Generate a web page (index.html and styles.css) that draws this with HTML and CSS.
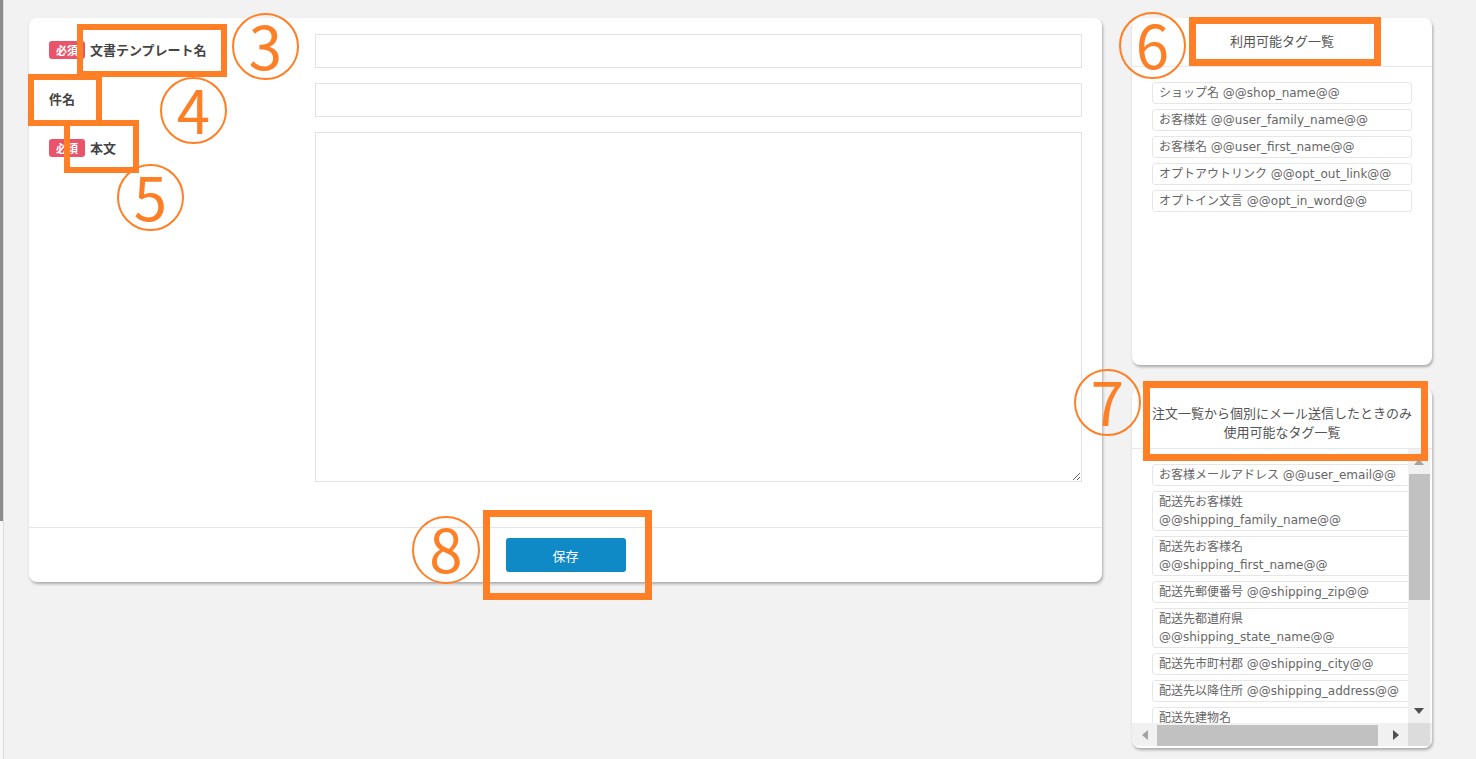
FILE: index.html
```html
<!DOCTYPE html>
<html lang="ja">
<head>
  <meta charset="UTF-8">
  <meta name="viewport" content="width=device-width, initial-scale=1.0">
  <title>メールテンプレート編集</title>
  <link rel="stylesheet" href="styles.css">
</head>
<body>
  <div class="page">
    <div class="edge"></div>

    <div class="layout">
      <form class="card main-card">
        <div class="form-grid">
          <label class="field-label"><span class="badge">必須</span>文書テンプレート名</label>
          <input type="text" class="text-input">

          <label class="field-label">件名</label>
          <input type="text" class="text-input">

          <label class="field-label"><span class="badge">必須</span>本文</label>
          <textarea class="text-area"></textarea>
        </div>
        <div class="card-footer">
          <button type="button" class="btn-primary">保存</button>
        </div>
      </form>

      <aside class="side">
        <div class="panel tags-panel">
          <div class="panel-head">利用可能タグ一覧</div>
          <ul class="tag-list">
            <li class="tag">ショップ名 @@shop_name@@</li>
            <li class="tag">お客様姓 @@user_family_name@@</li>
            <li class="tag">お客様名 @@user_first_name@@</li>
            <li class="tag">オプトアウトリンク @@opt_out_link@@</li>
            <li class="tag">オプトイン文言 @@opt_in_word@@</li>
          </ul>
        </div>

        <div class="panel order-panel">
          <div class="panel-head">注文一覧から個別にメール送信したときのみ<br>使用可能なタグ一覧</div>
          <div class="scroll-view">
            <div class="scroll-body">
              <ul class="tag-list">
                <li class="tag">お客様メールアドレス @@user_email@@</li>
                <li class="tag">配送先お客様姓 @@shipping_family_name@@</li>
                <li class="tag">配送先お客様名 @@shipping_first_name@@</li>
                <li class="tag">配送先郵便番号 @@shipping_zip@@</li>
                <li class="tag">配送先都道府県 @@shipping_state_name@@</li>
                <li class="tag">配送先市町村郡 @@shipping_city@@</li>
                <li class="tag">配送先以降住所 @@shipping_address@@</li>
                <li class="tag">配送先建物名 @@shipping_building_name@@</li>
              </ul>
            </div>
            <div class="vbar">
              <div class="sb-btn"><span class="arrow arrow-up"></span></div>
              <div class="vbar-thumb"></div>
              <div class="sb-fill"></div>
              <div class="sb-btn"><span class="arrow arrow-down"></span></div>
            </div>
          </div>
          <div class="hbar">
            <div class="sb-btn-h"><span class="arrow arrow-left"></span></div>
            <div class="hbar-thumb"></div>
            <div class="sb-fill"></div>
            <div class="sb-btn-h"><span class="arrow arrow-right"></span></div>
            <div class="sb-corner"></div>
          </div>
        </div>
      </aside>
    </div>

    <!-- annotation marks drawn over the screenshot -->
    <div class="annotations">
      <div class="mark-box box-3"></div>
      <div class="mark-box box-4"></div>
      <div class="mark-box box-5"></div>
      <div class="mark-box box-6"></div>
      <div class="mark-box box-7"></div>
      <div class="mark-box box-8"></div>
      <div class="mark-num num-3">3</div>
      <div class="mark-num num-4">4</div>
      <div class="mark-num num-5">5</div>
      <div class="mark-num num-6">6</div>
      <div class="mark-num num-7">7</div>
      <div class="mark-num num-8">8</div>
    </div>
  </div>
</body>
</html>
```

FILE: styles.css
```css
* {
  box-sizing: border-box;
}

body {
  margin: 0;
  background-color: #f2f2f2;
  font-family: "DejaVu Sans", "Noto Sans CJK JP", sans-serif;
  font-size: 13px;
  color: #444;
}

.page {
  position: relative;
  display: flex;
  min-height: 759px;
}

.edge {
  width: 4px;
  flex: none;
  background: linear-gradient(#8c8c8c 0 521px, #f7f7f7 521px);
  border-right: 1px solid #dcdcdc;
}

.layout {
  display: flex;
  align-items: flex-start;
  gap: 30px;
  padding: 18px 0 0 25px;
}

/* main form card */
.card {
  background-color: #fff;
  border-radius: 8px;
  box-shadow: 1px 2px 3px rgba(0, 0, 0, 0.3);
}

.main-card {
  width: 1073px;
  margin: 0;
}

.form-grid {
  display: grid;
  grid-template-columns: 266px 767px;
  row-gap: 15px;
  padding: 16px 20px 45px;
}

.field-label {
  display: flex;
  align-items: center;
  gap: 5px;
  align-self: start;
  padding-top: 6px;
  line-height: 20px;
  font-family: "Noto Sans CJK JP", sans-serif;
  font-weight: bold;
  color: #444;
}

.badge {
  display: inline-block;
  width: 36px;
  height: 18px;
  border-radius: 3px;
  background-color: #e9546b;
  color: #fff;
  font-size: 11px;
  line-height: 18px;
  text-align: center;
}

.text-input,
.text-area {
  display: block;
  width: 100%;
  border: 1px solid #e2e2e2;
  border-radius: 0;
  font-family: inherit;
  font-size: 13px;
}

.text-input {
  height: 34px;
}

.text-area {
  height: 350px;
  resize: both;
}

.card-footer {
  display: flex;
  justify-content: center;
  padding: 10px;
  border-top: 1px solid #e6e6e6;
}

.btn-primary {
  width: 120px;
  height: 34px;
  border: none;
  border-radius: 3px;
  background-color: #108ac6;
  color: #fff;
  font-family: "Noto Sans CJK JP", sans-serif;
  font-size: 13px;
  cursor: pointer;
}

/* tag panels */
.side {
  width: 300px;
  display: flex;
  flex-direction: column;
  gap: 23px;
}

.panel {
  background-color: #fff;
  border-radius: 8px;
  box-shadow: 1px 2px 3px rgba(0, 0, 0, 0.3);
  overflow: hidden;
}

.panel-head {
  text-align: center;
  color: #555;
  font-family: "Noto Sans CJK JP", sans-serif;
  border-bottom: 1px solid #e8e8e8;
}

.tags-panel {
  height: 347px;
}

.tags-panel .panel-head {
  height: 49px;
  line-height: 46px;
}

.tag-list {
  list-style: none;
  margin: 0;
  padding: 15px 20px 0;
}

.tag {
  width: 260px;
  margin-bottom: 5px;
  padding: 1px 6px;
  border: 1px solid #e6e6e6;
  border-radius: 3px;
  font-size: 12px;
  line-height: 18px;
  color: #666;
}

.order-panel {
  height: 360px;
  display: flex;
  flex-direction: column;
}

.order-panel .panel-head {
  padding: 15px 10px 7px;
  line-height: 19px;
}

.scroll-view {
  display: flex;
  height: 274px;
  flex: none;
}

.scroll-body {
  flex: 1;
  overflow: hidden;
  padding: 15px 0 0 20px;
}

.scroll-body .tag-list {
  padding: 0;
}

/* drawn scrollbars */
.vbar {
  width: 22px;
  margin-right: 2px;
  display: flex;
  flex-direction: column;
  background-color: #f1f1f1;
}

.sb-btn {
  height: 25px;
  display: flex;
  align-items: center;
  justify-content: center;
}

.vbar-thumb {
  height: 126px;
  margin-left: 1px;
  background-color: #c1c1c1;
}

.sb-fill {
  flex: 1;
}

.hbar {
  height: 23px;
  display: flex;
  background-color: #f1f1f1;
  flex: none;
}

.sb-btn-h {
  width: 25px;
  display: flex;
  align-items: center;
  justify-content: center;
}

.hbar-thumb {
  width: 221px;
  height: 21px;
  align-self: flex-end;
  background-color: #c1c1c1;
}

.sb-corner {
  width: 22px;
  margin-right: 2px;
  background-color: #dcdcdc;
}

.arrow {
  width: 0;
  height: 0;
  border-style: solid;
  border-color: transparent;
}

.arrow-up {
  border-width: 0 5px 6px;
  border-bottom-color: #a3a3a3;
}

.arrow-down {
  border-width: 6px 5px 0;
  border-top-color: #505050;
}

.arrow-left {
  border-width: 5px 6px 5px 0;
  border-right-color: #a3a3a3;
}

.arrow-right {
  border-width: 5px 0 5px 6px;
  border-left-color: #505050;
}

/* orange annotation marks */
.annotations {
  position: absolute;
  inset: 0;
  pointer-events: none;
}

.mark-box {
  position: absolute;
  border: 6px solid #ff7f27;
}

.box-3 { left: 77px; top: 24px; width: 150px; height: 53px; }
.box-4 { left: 28px; top: 74px; width: 74px; height: 52px; }
.box-5 { left: 64px; top: 120px; width: 75px; height: 53px; }
.box-6 { left: 1189px; top: 17px; width: 192px; height: 49px; border-width: 7px; }
.box-7 { left: 1143px; top: 381px; width: 285px; height: 80px; border-width: 7px; }
.box-8 { left: 483px; top: 510px; width: 169px; height: 90px; border-width: 7px; }

.mark-num {
  position: absolute;
  width: 67px;
  height: 67px;
  display: flex;
  align-items: center;
  justify-content: center;
  padding-bottom: 6px;
  border: 2px solid #ff7f27;
  border-radius: 50%;
  color: #ff7f27;
  font-family: "Noto Sans CJK JP", sans-serif;
  font-size: 60px;
  line-height: 1;
}

.num-3 { left: 232px; top: 13px; }
.num-4 { left: 160px; top: 77px; }
.num-5 { left: 117px; top: 164px; }
.num-6 { left: 1119px; top: 12px; }
.num-7 { left: 1074px; top: 369px; }
.num-8 { left: 412px; top: 516px; width: 68px; height: 68px; }
```
